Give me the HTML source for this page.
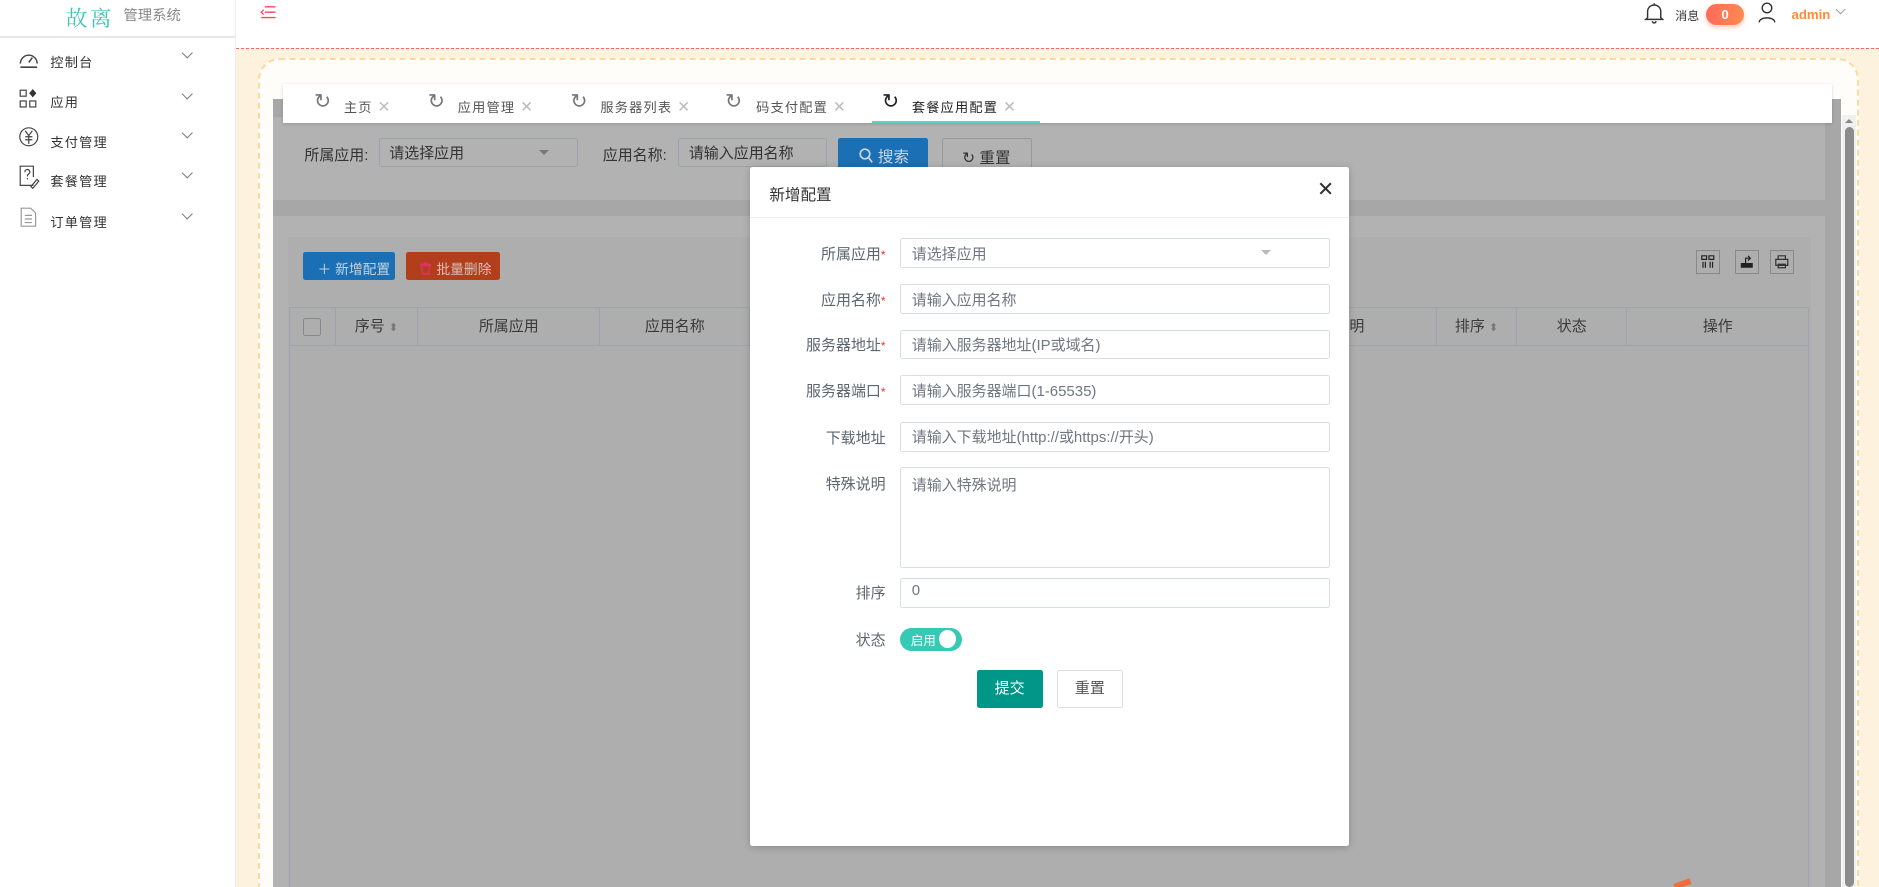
<!DOCTYPE html>
<html><head><meta charset="utf-8"><style>
*{box-sizing:border-box;margin:0;padding:0}
html,body{width:1879px;height:887px;overflow:hidden;background:#fff;font-family:"Liberation Sans","Noto Sans CJK SC",sans-serif}
#w{position:absolute;left:0;top:0;width:1568px;height:740px;zoom:1.19834;overflow:hidden}
.a{position:absolute}
.side{left:0;top:0;width:197px;height:740px;background:#fff;border-right:1px solid #eee}
.mi{position:absolute;left:0;width:197px;height:20px;font-size:11px;color:#333;letter-spacing:1px}
.mi span.t{position:absolute;left:42px;top:3px}
.mi .ch{position:absolute;left:153px;top:1px;width:7px;height:7px;border-right:1px solid #777;border-bottom:1px solid #777;transform:rotate(45deg)}
.tab{position:absolute;top:78px;font-size:11px;color:#555;letter-spacing:1px}
.tx{color:#bbb;font-size:13px}
.lbl{position:absolute;font-size:12.5px;color:#5c6670;text-align:right;width:110px}
.inp{position:absolute;left:751px;width:359px;height:25px;border:1px solid #d8dde6;border-radius:2px;font-size:12.5px;color:#6f7780;padding:3px 9px;background:#fff}
.req{color:#e33;font-size:10px}
.th{position:absolute;top:257px;height:32px;border-right:1px solid #9ea3ad;font-size:12.5px;color:#3a3a3a;text-align:center;line-height:31px}
.tb{position:absolute;top:209px;width:20px;height:20px;border:1px solid #888}
</style></head><body><div id="w">
<div class="a side"></div>
<div class="a" style="left:0;top:30px;width:197px;height:2px;background:#e8e8e8"></div>
<div class="a" style="left:55px;top:2px;font-size:18px;color:#3ec5b4;font-family:'Noto Serif CJK SC',serif;letter-spacing:2px">故离</div>
<div class="a" style="left:103px;top:3px;font-size:12px;color:#888">管理系统</div>
<div class="mi" style="top:40px"><svg class="a" style="left:15px;top:0" width="18" height="18" viewBox="0 0 18 18"><path d="M2 13a7 7 0 1 1 14 0" fill="none" stroke="#444" stroke-width="1.2"/><path d="M9 12l3-4" stroke="#444" stroke-width="1.3"/><path d="M2 16h14" stroke="#444" stroke-width="1.3"/></svg><span class="t">控制台</span><i class="ch"></i></div>
<div class="mi" style="top:74px"><svg class="a" style="left:16px;top:0" width="18" height="18" viewBox="0 0 18 18"><rect x="1" y="1" width="5" height="5" fill="none" stroke="#444"/><rect x="1" y="10" width="5" height="5" fill="none" stroke="#444"/><rect x="9" y="10" width="5" height="5" fill="none" stroke="#444"/><path d="M11.5 0l3 3.5-3 3.5-3-3.5z" fill="#333"/></svg><span class="t">应用</span><i class="ch"></i></div>
<div class="mi" style="top:107px"><svg class="a" style="left:15px;top:-2px" width="18" height="18" viewBox="0 0 18 18"><circle cx="9" cy="9" r="7.5" fill="none" stroke="#444"/><path d="M6 4l3 4 3-4M9 8v7M6 9h6M6 11.5h6" fill="none" stroke="#444"/></svg><span class="t">支付管理</span><i class="ch"></i></div>
<div class="mi" style="top:140px"><svg class="a" style="left:16px;top:-2px" width="18" height="20" viewBox="0 0 18 20"><path d="M12 17H1V1h11v9" fill="none" stroke="#444"/><path d="M5 6a2 2 0 1 1 3 1.5c-1 .6-1 1-1 2M7 11v1" fill="none" stroke="#444"/><path d="M10 18l5-6 1.5 1.5-5 6z" fill="none" stroke="#444"/></svg><span class="t">套餐管理</span><i class="ch"></i></div>
<div class="mi" style="top:174px"><svg class="a" style="left:17px;top:-1px" width="14" height="17" viewBox="0 0 14 17"><path d="M1 1h8l4 4v11H1z" fill="none" stroke="#999"/><path d="M4 7h6M4 10h6M4 13h6" stroke="#999"/></svg><span class="t">订单管理</span><i class="ch"></i></div>
<svg class="a" style="left:217px;top:4px" width="14" height="12" viewBox="0 0 14 12"><path d="M4 1.5h9M4 6h9M1 10.5h12M3 4L1 6l2 2" fill="none" stroke="#f45" stroke-width="1.1"/></svg>
<svg class="a" style="left:1372px;top:2px" width="17" height="18" viewBox="0 0 17 18"><path d="M3 13V8a5.5 5.5 0 0 1 11 0v5l1.5 1.5h-14zM7 16a1.5 1.5 0 0 0 3 0M8.5 1v1.5" fill="none" stroke="#333" stroke-width="1.2"/></svg>
<div class="a" style="left:1398px;top:6px;font-size:10px;color:#333">消息</div>
<div class="a" style="left:1424px;top:3px;width:31px;height:18px;border-radius:9px;background:linear-gradient(90deg,#ff6a5a,#ff8a50);color:#fff;font-size:11px;font-weight:bold;text-align:center;line-height:18px;box-shadow:0 2px 4px rgba(255,120,80,.4)">0</div>
<svg class="a" style="left:1467px;top:2px" width="15" height="17" viewBox="0 0 15 17"><circle cx="7.5" cy="5" r="4" fill="none" stroke="#333" stroke-width="1.2"/><path d="M1 17c0-5 13-5 13 0" fill="none" stroke="#333" stroke-width="1.2"/></svg>
<div class="a" style="left:1495px;top:6px;font-size:11px;color:#ff8a3a;font-weight:bold">admin</div>
<div class="a" style="left:1533px;top:5px;width:6px;height:6px;border-right:1px solid #999;border-bottom:1px solid #999;transform:rotate(45deg)"></div>
<div class="a" style="left:197px;top:40px;width:1371px;height:700px;background:#fdf2dd;border-top:1.5px dashed #f66"></div>
<div class="a" style="left:215px;top:48px;width:1336px;height:720px;background:#fffdfa;border:2px dashed #fcd9a0;border-radius:18px"></div>
<div class="a" style="left:228px;top:83px;width:1308px;height:657px;background:#a7a7a7"></div>
<div class="a" style="left:1537px;top:96px;width:12px;height:644px;background:#f0f0f0"></div>
<div class="a" style="left:1540px;top:106px;width:7px;height:634px;background:#8c8c8c;border-radius:4px"></div>
<div class="a" style="left:1540px;top:99px;width:0;height:0;border-left:4px solid transparent;border-right:4px solid transparent;border-bottom:4px solid #888"></div>
<div class="a" style="left:228px;top:98px;width:1295px;height:69px;background:#b2b2b2"></div>
<div class="a" style="left:254px;top:120px;font-size:12.5px;color:#333">所属应用:</div>
<div class="a" style="left:316px;top:115px;width:166px;height:24px;border:1px solid #9ca2ad;border-radius:2px;font-size:12.5px;color:#333;padding:3px 8px">请选择应用</div>
<div class="a" style="left:450px;top:125px;border-left:5px solid transparent;border-right:5px solid transparent;border-top:5px solid #777"></div>
<div class="a" style="left:503px;top:120px;font-size:12.5px;color:#333">应用名称:</div>
<div class="a" style="left:566px;top:115px;width:124px;height:24px;border:1px solid #9ca2ad;border-radius:2px;font-size:12.5px;color:#333;padding:3px 8px">请输入应用名称</div>
<div class="a" style="left:699px;top:115px;width:75px;height:28px;background:#1a6fb5;border-radius:2px;color:#ccd6e2;font-size:13px;padding:6px 0 0 18px"><svg width="12" height="13" viewBox="0 0 12 13" style="vertical-align:-1px"><circle cx="5" cy="5" r="4" fill="none" stroke="#ccd6e2" stroke-width="1.4"/><path d="M8 8l3 4" stroke="#ccd6e2" stroke-width="1.4"/></svg> 搜索</div>
<div class="a" style="left:786px;top:115px;width:75px;height:28px;border:1px solid #999;border-radius:2px;color:#333;font-size:13px;padding:6px 0 0 16px">↻ 重置</div>
<div class="a" style="left:228px;top:180px;width:1295px;height:560px;background:#b2b2b2"></div>
<div class="a" style="left:240px;top:198px;width:1271px;height:542px;background:#aeaeae"></div>
<div class="a" style="left:253px;top:210px;width:77px;height:24px;background:#1a6fb5;border-radius:2px;color:#c6d2df;font-size:11.5px;padding:5px 0 0 12px">＋ 新增配置</div>
<div class="a" style="left:339px;top:210px;width:78px;height:24px;background:#b23e1c;border-radius:2px;color:#d8c0b8;font-size:11.5px;padding:5px 0 0 11px"><svg width="11" height="11" viewBox="0 0 11 11" style="vertical-align:-1px"><path d="M1 2h9M4 1h3M2 3h7l-1 7H3z" fill="none" stroke="#d36" stroke-width="1.2"/></svg> 批量删除</div>
<div class="tb" style="left:1415px"><svg width="18" height="18" viewBox="0 0 18 18"><path d="M4 4h4v3H4zM10 4h4v3h-4zM5 9v5M7 9v5M11 9v5M13 9v5" fill="none" stroke="#222"/></svg></div>
<div class="tb" style="left:1448px"><svg width="18" height="18" viewBox="0 0 18 18"><path d="M4 10h10v4H4z" fill="#222"/><path d="M8 10V6h4M10 4l2 2-2 2" fill="none" stroke="#222"/></svg></div>
<div class="tb" style="left:1477px"><svg width="18" height="18" viewBox="0 0 18 18"><path d="M6 7V4h6v3M4 7h10v5H4zM6 11h6v3H6z" fill="none" stroke="#333"/></svg></div>
<div class="a" style="left:241px;top:256px;width:1269px;height:500px;border:1px solid #9ea3ad"></div>
<div class="a" style="left:241px;top:288px;width:1269px;height:1px;background:#9ea3ad"></div>
<div class="th" style="left:241px;width:39px"><span style="display:inline-block;width:15px;height:15px;border:1px solid #888;vertical-align:middle;border-radius:2px"></span></div>
<div class="th" style="left:280px;width:69px">序号 <span style="color:#777;font-size:9px">⬍</span></div>
<div class="th" style="left:349px;width:152px">所属应用</div>
<div class="th" style="left:501px;width:125px">应用名称</div>
<div class="th" style="left:1126px;width:73px;text-align:left">明</div>
<div class="th" style="left:1199px;width:67px">排序 <span style="color:#777;font-size:9px">⬍</span></div>
<div class="th" style="left:1266px;width:92px">状态</div>
<div class="th" style="left:1358px;width:151px;border-right:none">操作</div>
<div class="a" style="left:236px;top:70px;width:1293px;height:33px;background:#fff;box-shadow:0 1px 3px rgba(0,0,0,.15)"></div>
<div class="tab" style="left:262px;top:74px"><span style="font-size:17px;color:#777">↻</span></div><div class="tab" style="left:287px;top:81px">主页 <span class="tx">✕</span></div>
<div class="tab" style="left:357px;top:74px"><span style="font-size:17px;color:#777">↻</span></div><div class="tab" style="left:382px;top:81px">应用管理 <span class="tx">✕</span></div>
<div class="tab" style="left:476px;top:74px"><span style="font-size:17px;color:#777">↻</span></div><div class="tab" style="left:501px;top:81px">服务器列表 <span class="tx">✕</span></div>
<div class="tab" style="left:605px;top:74px"><span style="font-size:17px;color:#777">↻</span></div><div class="tab" style="left:631px;top:81px">码支付配置 <span class="tx">✕</span></div>
<div class="tab" style="left:736px;top:74px"><span style="font-size:17px;color:#222">↻</span></div><div class="tab" style="left:761px;top:81px;color:#222">套餐应用配置 <span class="tx">✕</span></div>
<div class="a" style="left:728px;top:101px;width:140px;height:2px;background:#5fd3c2"></div>
<div class="a" style="left:626px;top:139px;width:500px;height:567px;background:#fff;border-radius:2px;box-shadow:0 1px 6px rgba(0,0,0,.2)"></div>
<div class="a" style="left:642px;top:153px;font-size:13px;color:#333">新增配置</div>
<div class="a" style="left:1099px;top:148px;font-size:17px;color:#333">✕</div>
<div class="a" style="left:626px;top:181px;width:500px;height:1px;background:#eee"></div>
<div class="lbl" style="left:629px;top:203px">所属应用<span class="req">*</span></div>
<div class="inp" style="top:199px">请选择应用</div>
<div class="a" style="left:1052px;top:209px;border-left:5px solid transparent;border-right:5px solid transparent;border-top:5px solid #bbb"></div>
<div class="lbl" style="left:629px;top:241px">应用名称<span class="req">*</span></div>
<div class="inp" style="top:237px">请输入应用名称</div>
<div class="lbl" style="left:629px;top:279px">服务器地址<span class="req">*</span></div>
<div class="inp" style="top:275px">请输入服务器地址(IP或域名)</div>
<div class="lbl" style="left:629px;top:317px">服务器端口<span class="req">*</span></div>
<div class="inp" style="top:313px">请输入服务器端口(1-65535)</div>
<div class="lbl" style="left:629px;top:356px">下载地址</div>
<div class="inp" style="top:352px">请输入下载地址(http://或https://开头)</div>
<div class="lbl" style="left:629px;top:395px">特殊说明</div>
<div class="inp" style="top:390px;height:84px;padding-top:5px">请输入特殊说明</div>
<div class="lbl" style="left:629px;top:486px">排序</div>
<div class="inp" style="top:482px">0</div>
<div class="lbl" style="left:629px;top:525px">状态</div>
<div class="a" style="left:751px;top:524px;width:52px;height:19px;border-radius:10px;background:#36c9b6;color:#fff;font-size:10.5px;padding:2px 0 0 9px">启用</div>
<div class="a" style="left:784px;top:526px;width:14px;height:15px;border-radius:50%;background:#fff"></div>
<div class="a" style="left:815px;top:559px;width:55px;height:32px;background:#009688;border-radius:2px;color:#fff;font-size:12.5px;text-align:center;line-height:32px">提交</div>
<div class="a" style="left:882px;top:559px;width:55px;height:32px;border:1px solid #ddd;border-radius:2px;color:#555;font-size:12.5px;text-align:center;line-height:30px">重置</div>
<div class="a" style="left:1397px;top:735px;width:14px;height:5px;background:#f26b3a;transform:rotate(-20deg)"></div>
</div></body></html>
